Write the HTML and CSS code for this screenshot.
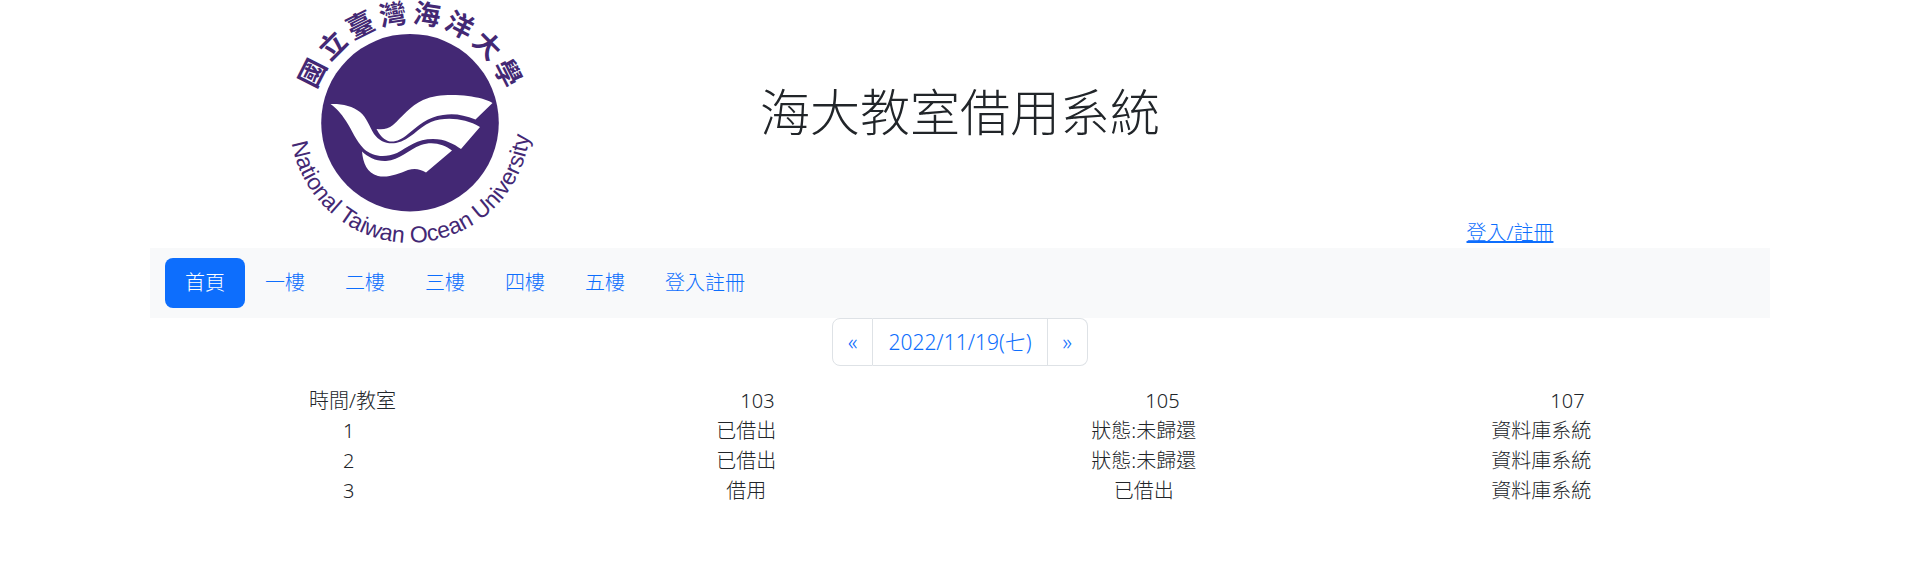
FILE: index.html
```html
<!DOCTYPE html>
<html lang="zh-Hant">
<head>
<meta charset="utf-8">
<meta name="viewport" content="width=device-width, initial-scale=1">
<title>海大教室借用系統</title>
<link rel="stylesheet" href="styles.css">
</head>
<body>
<div class="container">
  <header class="header">
    <svg class="logo" viewBox="0 0 280 248" role="img" aria-label="國立臺灣海洋大學">
      <defs><path id="ring" d="M10 122.7A120 120 0 0 0 250 122.7"/></defs>
      <circle class="ink" cx="130" cy="122.7" r="88.8"/>
      <g class="feathers">
        <path d="M50.5 104C61 103.500 73 106 80 112C87 118 89 126 94 134C99 141 107 144.500 116 143C131 140 137 128 151 122C165 116.500 185 118 200 127L181 149C174 144 165 139 153 139C137 139 128 147 117 153C105 158 93 157 84 149C76 141 72 130 66 121C61 113 56 108 50.500 104Z"/>
        <path d="M96.500 129C103 130 108 129 113 125C122 117 130 106 143 100C157 94 174 94.500 188 96C198 97.500 206 99 212.500 103L195.500 119.500C184 115 174 113 163 115C147 117 138 126 128 134C121 140 114 143 108 141C103 139 99 134 96.500 129Z"/>
        <path d="M82 151.500C88 157 96 161.500 106 161C120 160 128 150 141 145C152 141 164 144 172 150.500L146 172.500C140 169 135 168 128 170C118 174 108 178 98 176C87 173 83 163 82 151.500Z"/>
      </g>
      <g class="logo-zh">
        <text x="130" y="23" transform="rotate(-63 130 122.7)">國</text>
        <text x="130" y="23" transform="rotate(-45 130 122.7)">立</text>
        <text x="130" y="23" transform="rotate(-27 130 122.7)">臺</text>
        <text x="130" y="23" transform="rotate(-9 130 122.7)">灣</text>
        <text x="130" y="23" transform="rotate(9 130 122.7)">海</text>
        <text x="130" y="23" transform="rotate(27 130 122.7)">洋</text>
        <text x="130" y="23" transform="rotate(45 130 122.7)">大</text>
        <text x="130" y="23" transform="rotate(63 130 122.7)">學</text>
      </g>
      <text class="logo-en"><textPath href="#ring" startOffset="51%">National Taiwan Ocean University</textPath></text>
    </svg>
    <h1 class="title">海大教室借用系統</h1>
    <a class="login" href="#">登入/註冊</a>
  </header>

  <nav class="nav">
    <a class="nav-link active" href="#" aria-current="page">首頁</a>
    <a class="nav-link" href="#">一樓</a>
    <a class="nav-link" href="#">二樓</a>
    <a class="nav-link" href="#">三樓</a>
    <a class="nav-link" href="#">四樓</a>
    <a class="nav-link" href="#">五樓</a>
    <a class="nav-link" href="#">登入註冊</a>
  </nav>

  <nav class="pagination" aria-label="日期">
    <a class="page-link" href="#">«</a>
    <a class="page-link" href="#">2022/11/19(七)</a>
    <a class="page-link" href="#">»</a>
  </nav>

  <table class="schedule">
    <thead>
      <tr><th>時間/教室</th><th>103</th><th>105</th><th>107</th></tr>
    </thead>
    <tbody>
      <tr><td>1</td><td>已借出</td><td>狀態:未歸還</td><td>資料庫系統</td></tr>
      <tr><td>2</td><td>已借出</td><td>狀態:未歸還</td><td>資料庫系統</td></tr>
      <tr><td>3</td><td>借用</td><td>已借出</td><td>資料庫系統</td></tr>
    </tbody>
  </table>
</div>
</body>
</html>
```

FILE: styles.css
```css
*,
*::before,
*::after {
  box-sizing: border-box;
}

body {
  margin: 0;
  background: #fff;
  color: #212529;
  font: 300 20px/30px "Noto Sans", "Noto Sans CJK TC", sans-serif;
}

a {
  color: #0d6efd;
}

.container {
  max-width: 1650px;
  margin: 0 auto;
  padding: 0 15px;
}

.header {
  display: grid;
  grid-template-columns: repeat(3, 1fr);
  justify-items: center;
}

.logo {
  display: block;
  width: 280px;
  max-width: 100%;
}

.ink,
.logo-zh,
.logo-en {
  fill: #432874;
}

.feathers {
  fill: #fff;
}

.logo-zh {
  font: 700 27px "Liberation Sans", "Noto Sans CJK TC", sans-serif;
  text-anchor: middle;
}

.logo-en {
  font: 400 23px "Liberation Sans", sans-serif;
  text-anchor: middle;
}

.title {
  margin: 0;
  padding-top: 82px;
  font-size: 50px;
  font-weight: 300;
  line-height: 60px;
  white-space: nowrap;
}

.login {
  align-self: end;
  margin-left: 20px;
}

.nav {
  display: flex;
  flex-wrap: wrap;
  padding: 10px 15px;
  background: #f8f9fa;
}

.nav-link {
  padding: 10px 20px;
  border-radius: 8px;
  text-decoration: none;
}

.nav-link.active {
  background: #0d6efd;
  color: #fff;
}

.pagination {
  display: flex;
  justify-content: center;
  margin-bottom: 20px;
}

.page-link {
  padding: 8px 15px;
  border: 1px solid #dee2e6;
  font-size: 21px;
  text-decoration: none;
}

.page-link + .page-link {
  border-left: 0;
}

.page-link:first-child {
  border-radius: 8px 0 0 8px;
}

.page-link:last-child {
  border-radius: 0 8px 8px 0;
}

.schedule,
.schedule thead,
.schedule tbody {
  display: block;
}

.schedule tr {
  display: grid;
  grid-template-columns: repeat(4, 1fr);
}

.schedule tbody {
  padding-right: 30px;
}

.schedule th,
.schedule td {
  padding: 0;
  font-weight: 300;
  text-align: center;
}
```
